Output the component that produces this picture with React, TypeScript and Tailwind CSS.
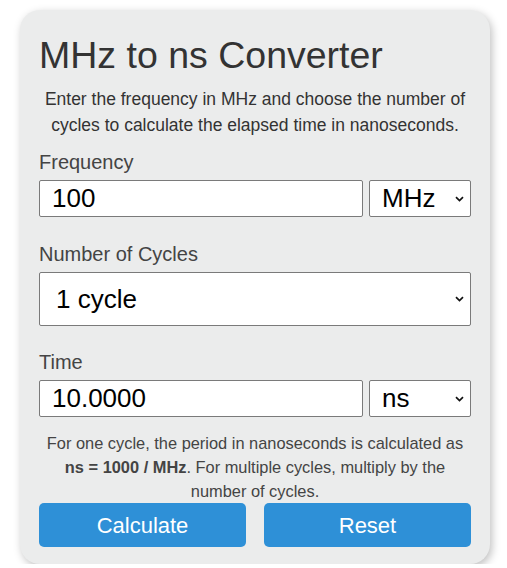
import { useState } from "react"

const Chevron = () => (
  <svg
    className="pointer-events-none absolute right-[7px] top-1/2 -translate-y-1/2"
    width="9"
    height="6"
    viewBox="0 0 9 6"
    fill="none"
  >
    <path d="M1 1.2L4.5 4.6L8 1.2" stroke="#111" strokeWidth="1.7" />
  </svg>
)

export default function App() {
  const [freq, setFreq] = useState("100")
  const [unit, setUnit] = useState("MHz")
  const [cycles, setCycles] = useState("1")
  const [time, setTime] = useState("10.0000")
  const [tunit, setTunit] = useState("ns")

  const calculate = () => {
    const f = parseFloat(freq)
    if (!f) return
    const mhz = unit === "GHz" ? f * 1000 : unit === "kHz" ? f / 1000 : f
    let ns = (1000 / mhz) * parseInt(cycles)
    if (tunit === "µs") ns = ns / 1000
    if (tunit === "ps") ns = ns * 1000
    setTime(ns.toFixed(4))
  }

  const reset = () => {
    setFreq("100")
    setUnit("MHz")
    setCycles("1")
    setTime("10.0000")
    setTunit("ns")
  }

  return (
    <div className="font-['Liberation_Sans',Arial,sans-serif]">
      <div className="ml-[20px] mt-[10px] w-[470px] rounded-[20px] bg-[#ebecec] px-[19px] pb-[17px] pt-[24px] shadow-[2px_3px_8px_rgba(0,0,0,0.25)]">
        <h1 className="text-[37.5px] leading-[43px] text-[#333]">MHz to ns Converter</h1>
        <p className="mt-[10px] text-center text-[17.5px] leading-[25.5px] text-[#333]">
          Enter the frequency in MHz and choose the number of cycles to calculate the elapsed time in nanoseconds.
        </p>

        <label className="mt-[12px] block text-[20px] leading-[24px] text-[#444]">Frequency</label>
        <div className="mt-[6px] flex gap-[6px]">
          <input
            value={freq}
            onChange={(e) => setFreq(e.target.value)}
            className="h-[37px] w-[324px] rounded-[2px] border border-[#7a7a7a] bg-white px-3 py-0 text-[26px] leading-[35px] text-black outline-none"
          />
          <div className="relative w-[102px]">
            <select
              value={unit}
              onChange={(e) => setUnit(e.target.value)}
              className="h-[37px] w-full appearance-none rounded-[2px] border border-[#7a7a7a] bg-white py-0 pl-[12px] text-[26px] leading-[35px] text-black outline-none"
            >
              <option>kHz</option>
              <option>MHz</option>
              <option>GHz</option>
            </select>
            <Chevron />
          </div>
        </div>

        <label className="mt-[25px] block text-[20px] leading-[24px] text-[#444]">Number of Cycles</label>
        <div className="relative mt-[6px]">
          <select
            value={cycles}
            onChange={(e) => setCycles(e.target.value)}
            className="h-[54px] w-full appearance-none rounded-[2px] border border-[#7a7a7a] bg-white py-0 pl-[16px] text-[26px] leading-[52px] text-black outline-none"
          >
            <option value="1">1 cycle</option>
            <option value="2">2 cycles</option>
            <option value="5">5 cycles</option>
            <option value="10">10 cycles</option>
          </select>
          <Chevron />
        </div>

        <label className="mt-[24px] block text-[20px] leading-[24px] text-[#444]">Time</label>
        <div className="mt-[6px] flex gap-[6px]">
          <input
            value={time}
            readOnly
            className="h-[37px] w-[324px] rounded-[2px] border border-[#7a7a7a] bg-white px-3 py-0 text-[26px] leading-[35px] text-black outline-none"
          />
          <div className="relative w-[102px]">
            <select
              value={tunit}
              onChange={(e) => setTunit(e.target.value)}
              className="h-[37px] w-full appearance-none rounded-[2px] border border-[#7a7a7a] bg-white py-0 pl-[12px] text-[26px] leading-[35px] text-black outline-none"
            >
              <option>ps</option>
              <option>ns</option>
              <option>µs</option>
            </select>
            <Chevron />
          </div>
        </div>

        <p className="mt-[14px] px-[6px] text-center text-[16.4px] leading-[24px] text-[#444]">
          For one cycle, the period in nanoseconds is calculated as <b>ns = 1000 / MHz</b>. For multiple cycles, multiply by the
          number of cycles.
        </p>

        <div className="grid grid-cols-2 gap-[18px]">
          <button
            onClick={calculate}
            className="h-[44px] rounded-[5px] bg-[#2e90d7] text-[22px] text-white"
          >
            Calculate
          </button>
          <button onClick={reset} className="h-[44px] rounded-[5px] bg-[#2e90d7] text-[22px] text-white">
            Reset
          </button>
        </div>
      </div>
    </div>
  )
}
